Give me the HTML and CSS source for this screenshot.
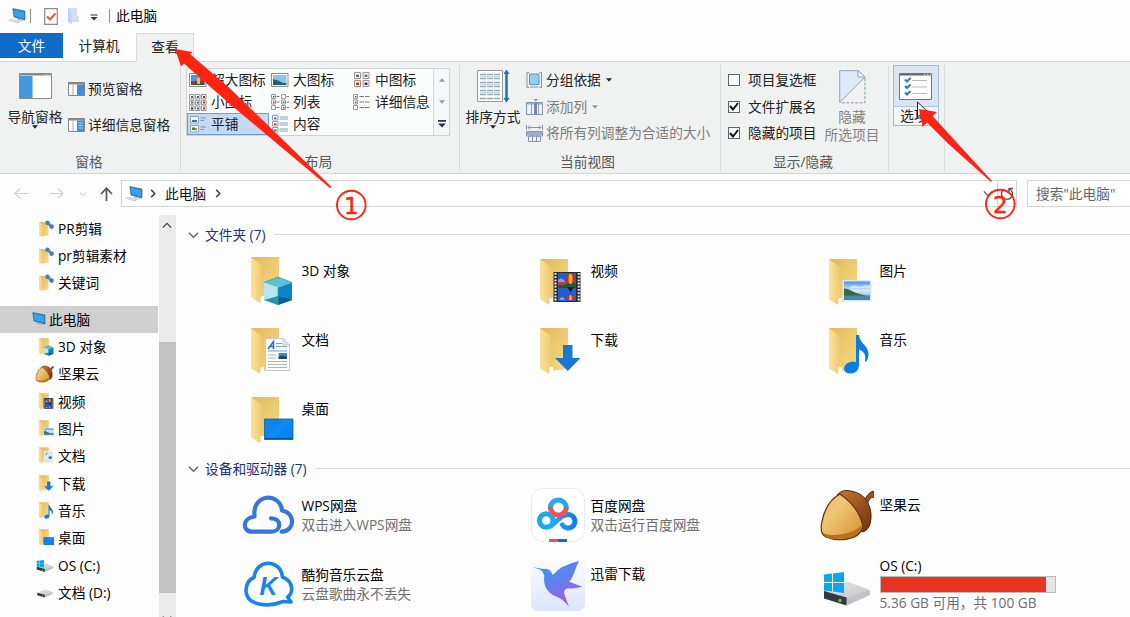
FILE: index.html
```
<!DOCTYPE html>
<html lang="zh-CN">
<head>
  <meta charset="UTF-8">
  <meta name="viewport" content="width=device-width, initial-scale=1.0">
  <title>此电脑</title>
  <link rel="stylesheet" href="styles.css">
</head>
<body>
  <svg class="defs" width="0" height="0">
    <defs>
      <linearGradient id="gFlap" x1="0" y1="0" x2="1" y2="0"><stop offset="0" stop-color="#fbe29c"/><stop offset="1" stop-color="#efcb72"/></linearGradient>
      <linearGradient id="gBack" x1="0" y1="0" x2="1" y2="1"><stop offset="0" stop-color="#e3b95b"/><stop offset="1" stop-color="#f7da85"/></linearGradient>
      <linearGradient id="gNut" x1="0" y1="0" x2="1" y2="1"><stop offset="0" stop-color="#e9bd68"/><stop offset=".35" stop-color="#f0c674"/><stop offset="1" stop-color="#d38d2b"/></linearGradient>
      <linearGradient id="gCap" x1="0" y1="0" x2="1" y2="1"><stop offset="0" stop-color="#c87a32"/><stop offset="1" stop-color="#6f3010"/></linearGradient>
      <linearGradient id="gBird" x1="0" y1="0" x2=".6" y2="1"><stop offset="0" stop-color="#3a9cf2"/><stop offset=".5" stop-color="#5b83ee"/><stop offset="1" stop-color="#a85be0"/></linearGradient>
      <linearGradient id="gCard" x1="0" y1="0" x2="0" y2="1"><stop offset="0" stop-color="#fdfdff"/><stop offset="1" stop-color="#dce5fd"/></linearGradient>
      <linearGradient id="gSky" x1="0" y1="0" x2="0" y2="1"><stop offset="0" stop-color="#4f93e0"/><stop offset=".5" stop-color="#dcecf8"/><stop offset="1" stop-color="#5b93b5"/></linearGradient>
      <linearGradient id="gBaidu" x1="0" y1="0" x2="1" y2="0"><stop offset="0" stop-color="#1fb0ee"/><stop offset="1" stop-color="#0f7ff0"/></linearGradient>
      <linearGradient id="gDrive" x1="0" y1="0" x2="1" y2="1"><stop offset="0" stop-color="#e6e7e9"/><stop offset="1" stop-color="#c3c5c9"/></linearGradient>
    </defs>

    <symbol id="folder" viewBox="0 0 54 54">
      <path d="M9 3H37V44L19 46Z" fill="url(#gBack)"/>
      <path d="M17 42H22V47L19 49Z" fill="#fff"/>
      <path d="M9 3L19.6 11V41.5L18.4 43V49L9 43.5Z" fill="url(#gFlap)"/>
    </symbol>
    <symbol id="objects" viewBox="0 0 54 54">
      <use href="#folder"/>
      <path d="M36 23L50 28.5L36 33.5L22 28.5Z" fill="#5cc0d2"/>
      <path d="M22 28.5L36 33.5V51L22 46Z" fill="#b9e6ee"/>
      <path d="M50 28.5L36 33.5V51L50 46Z" fill="#0b84c6"/>
      <path d="M22 46L36 42V51Z" fill="#1e98a8"/><path d="M50 46L36 42V51Z" fill="#075f8f"/>
      <path d="M22 28.5L36 23L50 28.5M36 33.5V51" fill="none" stroke="#2aa5be" stroke-width=".8"/>
    </symbol>
    <symbol id="video" viewBox="0 0 54 54">
      <use href="#folder"/>
      <g transform="translate(0 -2)">
        <path d="M22.500 18H49.500V48H22.500Z" fill="#2b2b2b"/>
        <path d="M27 19H45V32H27ZM27 33.500H45V47H27Z" fill="#245ccf"/>
        <path d="M24.500 19V48M47.700 19V48" stroke="#f4f4f4" stroke-width="2" stroke-dasharray="1.800 1.400"/>
        <path d="M27 26q3-3 6 0l2 4h-8z" fill="#7aa6ea"/>
        <path d="M27 29.500H45V33H27Z" fill="#17613a"/>
        <path d="M27 28h7v3h-7z" fill="#c23a42"/>
        <ellipse cx="39.500" cy="25" rx="4.700" ry="5" fill="#d9281a"/><ellipse cx="39.500" cy="25" rx="2" ry="5" fill="#f4b91c"/>
        <path d="M36 33l3.500 5 3.500-5z" fill="#191919"/>
        <path d="M35 46q0-5 4.500-5t4.500 5z" fill="#d9281a"/><path d="M38 46q0-5 1.500-5t1.500 5z" fill="#f4b91c"/>
        <path d="M28 46q3-6 6 0z" fill="#7aa6ea"/>
      </g>
    </symbol>
    <symbol id="picture" viewBox="0 0 54 54">
      <use href="#folder"/>
      <path d="M22.500 24H51.500V45.500H22.500Z" fill="#dbe6f1"/>
      <path d="M24 25.500H50V44H24Z" fill="url(#gSky)"/>
      <path d="M24 32.500Q27 32 31 34.500T47 40H24Z" fill="#356b49"/>
      <path d="M24 39.500H50V44H24Z" fill="#4c86a5"/>
      <path d="M30 31q4-3 7-1t8-1q2 1 5 0v3H30z" fill="#fff" opacity=".5"/>
    </symbol>
    <symbol id="docs" viewBox="0 0 54 54">
      <use href="#folder"/>
      <path d="M23.500 13.500H41L47.500 20V45.500H23.500Z" fill="#fbfbfc" stroke="#c3c6ca" stroke-width=".9"/>
      <path d="M41 13.500V20H47.500Z" fill="#e4e7ea" stroke="#b5b8bc" stroke-width=".7"/>
      <path d="M26 24L31.500 16.500V24M28 21.500H31.500" fill="none" stroke="#2475b5" stroke-width="1.500"/>
      <path d="M34 18.500H40M34 21.500H45M26 26H45" stroke="#6fa7d2" stroke-width="1"/>
      <path d="M26 30H34M26 33H34M26 36.500H45M26 39.500H45M26 42.500H45" stroke="#aeb4ba" stroke-width="1"/>
      <path d="M36.500 28H45V34H36.500Z" fill="#3a8cc7"/><path d="M36.500 32Q40 29 45 32V34H36.500Z" fill="#244f63"/>
    </symbol>
    <symbol id="download" viewBox="0 0 54 54">
      <use href="#folder"/>
      <path d="M32 20H41.500V33H49.500L36.800 46L24 33H32Z" fill="#1878d3"/>
    </symbol>
    <symbol id="music" viewBox="0 0 54 54">
      <use href="#folder"/>
      <path d="M36 10H38.800Q40 16 44.500 20Q50 26 48 33Q47 36 45 37Q47 27 39 24.500V41Q38 48 31 48.500Q24 48.500 24 43.500Q25 37 33 36.500Q35 36.500 36 37.200Z" fill="#0a7de2"/>
    </symbol>
    <symbol id="desktop" viewBox="0 0 54 54">
      <use href="#folder"/>
      <path d="M22.500 25H51V45.500H22.500Z" fill="#0a84ee" stroke="#0a5da8" stroke-width=".8"/>
      <path d="M23 44.600H51" stroke="#08569e" stroke-width="1.300"/>
      <path d="M23 44L40 25.500H50.500L32 44Z" fill="#2a97f7" opacity=".25"/>
    </symbol>
    <symbol id="pinned" viewBox="0 0 17 18">
      <path d="M1 2H10.500V15.500L4.500 16.500Z" fill="url(#gBack)"/>
      <path d="M1 2L4.600 4.500V17L1 15.500Z" fill="url(#gFlap)"/>
      <path d="M9 3L13.500 6.500" stroke="#3e7fb5" stroke-width="2"/>
      <circle cx="9.500" cy="2.700" r="2.200" fill="#4180b5"/><circle cx="13.600" cy="6.600" r="2.300" fill="#4180b5"/>
      <circle cx="12" cy="3" r="1" fill="#86b4db"/>
    </symbol>
    <symbol id="pc" viewBox="0 0 18 16">
      <path d="M4.800 .6L17 3V12L6 9Z" fill="#1b76bd" stroke="#3b5f78" stroke-width=".6"/>
      <path d="M5.600 1.500L16.300 3.700V10.800L6.600 8.200Z" fill="#38a0ee"/>
      <path d="M9.500 10.500L14.500 11.800L15.500 13L9 12Z" fill="#a9b0b6"/>
      <path d="M0 12.200L3.500 11L13 13.500L9.500 15.600Z" fill="#c2c7cb"/>
      <path d="M2 12.200L10 14.600M3.500 11.600L11.500 13.900" stroke="#eceeef" stroke-width=".5"/>
    </symbol>
    <symbol id="nut" viewBox="0 0 54 54">
      <path d="M44 15Q46 6 53 3Q55 5 54 9Q49 9 47 17Z" fill="#9a5424" stroke="#552409"/>
      <path d="M17 7Q22 1 31 3Q43 5 48 15Q53 25 50 36Q48 43 42 44Z" fill="url(#gCap)" stroke="#5b270b"/>
      <path d="M20 6Q5 14 1.500 36Q0 46 6 49Q15 53 27 51Q40 49 43 39Q40 20 20 6Z" fill="url(#gNut)" stroke="#6f310d" stroke-width="1.300"/>
      <path d="M42 37Q33 46 15 47Q7 47 3 45Q5 50 12 50.500Q40 53 42 37Z" fill="#b9711a"/>
    </symbol>
    <symbol id="wps" viewBox="0 0 54 54">
      <path d="M29 30.300C40 30 40 43.700 29 43.700H10C0 43.700 0 30 12.500 28.500C10 5 38 4 40 22.500C54 25 53 43 39.700 43.700" fill="none" stroke="#3576de" stroke-width="4.200" stroke-linecap="round" stroke-linejoin="round"/>
    </symbol>
    <symbol id="baidu" viewBox="0 0 54 54">
      <rect x=".5" y=".5" width="53" height="53" rx="11" fill="#fff" stroke="#ebebee"/>
      <circle cx="15.200" cy="32.500" r="6.800" fill="none" stroke="#1ba9ee" stroke-width="5"/>
      <path d="M20 38L33.500 26M31.300 36.800A6.800 6.800 0 1 0 33.500 27.500L21.500 25" fill="none" stroke="url(#gBaidu)" stroke-width="5" stroke-linecap="round"/>
      <circle cx="27.300" cy="20" r="6" fill="#fff"/>
      <path d="M19.300 20A8 8 0 0 1 35.300 20" fill="none" stroke="#25a8ef" stroke-width="5"/>
      <path d="M19.300 19A8 8 0 1 0 35.300 19" fill="none" stroke="#f0505c" stroke-width="5"/>
      <path d="M18 51H27V54H18Z" fill="#ee5061"/><path d="M27 51H36V54H27Z" fill="#1869d8"/>
    </symbol>
    <symbol id="xunlei" viewBox="0 0 54 54">
      <rect width="54" height="54" rx="7" fill="url(#gCard)"/>
      <path d="M2.300 10.300L12.300 12Q19 10.500 21.700 18Q30 8 48 4Q45 10 43 16.300Q41 22 38.300 24.700L51.300 29.700Q43 32 37 31.300Q33 32 33 36.300L38 49.700Q32 42 25.700 39.700Q15.700 36 13.500 27Q12.500 22 13.300 18.500Q12.500 15 9.700 13Z" fill="url(#gBird)"/>
    </symbol>
    <symbol id="drive" viewBox="0 0 54 30">
      <path d="M4 14L28 5L50 14V18L28 28L4 21Z" fill="#bfc2c5"/>
      <path d="M4 14L28 5L50 13L27 21Z" fill="url(#gDrive)"/>
      <path d="M4 14L26.500 20.500V28.500L4 21.500Z" fill="#35383b"/>
      <circle cx="20" cy="23.500" r="1.800" fill="#42d058"/>
    </symbol>
    <symbol id="osdrive" viewBox="0 0 54 54">
      <use href="#drive" x="0" y="20" width="54" height="30"/>
      <path d="M4 17.500L12 16.500V25H4ZM13 16.400L24 15V25H13ZM4 26H12V34.500L4 33.500ZM13 26H24V36L13 34.600Z" fill="#08a6ec"/>
    </symbol>

    <symbol id="v-xl" viewBox="0 0 18 16">
      <path d="M.5 1.500H17V14.500H.5Z" fill="#fff" stroke="#8c8c8c"/>
      <path d="M2 3H15.500V13H2Z" fill="#5a96d6"/><path d="M2 9H15.500V13H2Z" fill="#275c35"/>
      <path d="M8 6h3v6H8z" fill="#f0c42c"/><path d="M11.500 5h2.500v6h-2.500zM3 9h3v3H3z" fill="#cf2e24"/>
    </symbol>
    <symbol id="v-lg" viewBox="0 0 18 16">
      <path d="M.5 1.500H17V14.500H.5Z" fill="#fff" stroke="#8c8c8c"/>
      <path d="M2 3H15.500V13H2Z" fill="#8cc5ea"/><path d="M2 7Q7 8 12 11H15.500V13H2Z" fill="#245f72"/>
    </symbol>
    <symbol id="v-md" viewBox="0 0 18 16">
      <path d="M1.500.5H7.500V6.500H1.500ZM10 .5H16V6.500H10ZM1.500 8.500H7.500V14.500H1.500ZM10 8.500H16V14.500H10Z" fill="#fff" stroke="#a58d84"/>
      <path d="M3 2.500H6V5H3Z" fill="#3978b8"/><path d="M11.500 2.500H14.500V5H11.500Z" fill="#2f8f85"/><path d="M3 10.500H6V13H3Z" fill="#c13d24"/><path d="M11.500 10.500H14.500V13H11.500Z" fill="#233f87"/>
    </symbol>
    <symbol id="v-sm" viewBox="0 0 18 17">
      <path d="M.5.5H5V5H.5ZM6.500.5H11V5H6.500ZM12.500.5H17V5H12.500ZM.5 6.300H5V10.800H.5ZM6.500 6.300H11V10.800H6.500ZM12.500 6.300H17V10.800H12.500ZM.5 12H5V16.500H.5ZM6.500 12H11V16.500H6.500ZM12.500 12H17V16.500H12.500Z" fill="#fff" stroke="#9d9490"/>
      <path d="M2 2H4V4H2ZM8 7.500H10V9.500H8ZM8 13.500H10V15.500H8Z" fill="#2a66a8"/><path d="M8 2H10V4H8ZM2 7.500H4V9.500H2Z" fill="#24817a"/><path d="M14 2H16V4H14ZM14 7.500H16V9.500H14ZM14 13.500H16V15.500H14Z" fill="#bd2c22"/><path d="M2 13.500H4V15.500H2Z" fill="#333"/>
    </symbol>
    <symbol id="v-list" viewBox="0 0 18 16">
      <path d="M.5.5H4.500V4.500H.5ZM.5 6H4.500V10H.5ZM.5 11.500H4.500V15.500H.5ZM10.500.5H14.500V4.500H10.500ZM10.500 6H14.500V10H10.500ZM10.500 11.500H14.500V15.500H10.500Z" fill="#fff" stroke="#999"/>
      <path d="M5.500 2.500H8.500M5.500 8H8.500M5.500 13.500H8.500M15.500 2.500H18M15.500 8H18M15.500 13.500H18" stroke="#777"/>
      <path d="M2 2H3.500V3.500H2ZM12 7.500H13.500V9H12Z" fill="#27699f"/><path d="M2 7.500H3.500V9H2ZM12 13H13.500V14.500H12Z" fill="#bb3527"/>
    </symbol>
    <symbol id="v-detail" viewBox="0 0 18 16">
      <path d="M.5.5H4.500V4.500H.5ZM.5 6H4.500V10H.5ZM.5 11.500H4.500V15.500H.5Z" fill="#fff" stroke="#999"/>
      <path d="M6.500 2.500H17M6.500 8H17M6.500 13.500H17" stroke="#777" stroke-dasharray="4.500 1"/>
      <path d="M2 2H3.500V3.500H2Z" fill="#27699f"/><path d="M2 7.500H3.500V9H2Z" fill="#bb3527"/>
    </symbol>
    <symbol id="v-tile" viewBox="0 0 18 17">
      <path d="M1.500.5H9.500V7H1.500ZM1.500 9.500H9.500V16H1.500Z" fill="#f4fafc" stroke="#9ba3aa"/>
      <path d="M3 4H8V6H3Z" fill="#2878b5"/><path d="M3 11.500H6V14H3Z" fill="#31823b"/><path d="M6 12H8V14.500H6Z" fill="#d08727"/>
      <path d="M11.500 2H17M11.500 4.500H15M11.500 11H17M11.500 13.500H15" stroke="#7b93b1"/>
    </symbol>
    <symbol id="v-content" viewBox="0 0 18 18">
      <path d="M1.500.5H7V5H1.500ZM1.500 6.500H7V11H1.500ZM1.500 12.500H7V17H1.500Z" fill="#fff" stroke="#999"/>
      <path d="M3 2.500H5.500V4H3ZM3 14.500H5.500V16H3Z" fill="#27699f"/><path d="M3 8.500H5.500V10H3Z" fill="#a63535"/>
      <path d="M8.500 2H17M8.500 4H17M8.500 8H17M8.500 10H17M8.500 14H17M8.500 16H17" stroke="#8aa0c8"/>
    </symbol>
    <symbol id="down" viewBox="0 0 7 4"><path d="M0 0H7L3.500 4Z" fill="currentColor"/></symbol>
    <symbol id="chev-r" viewBox="0 0 6 10"><path d="M1 1L5 5L1 9" fill="none" stroke="currentColor" stroke-width="1.700"/></symbol>
    <symbol id="chev-d" viewBox="0 0 12 8"><path d="M1 1.500L6 6.500L11 1.500" fill="none" stroke="currentColor" stroke-width="1.500"/></symbol>
  </svg>

  <div class="window">
    <div class="titlebar">
      <svg class="tb-pc" width="18" height="16"><use href="#pc"/></svg>
      <span class="sep"></span>
      <svg class="tb-check" width="14" height="17" viewBox="0 0 14 17"><path d="M.7.700H13.300V16.300H.7Z" fill="#fdfdfd" stroke="#8c8c8c" stroke-width="1.200"/><path d="M3 8.500L6 11.500L11.500 5.500" fill="none" stroke="#e0662c" stroke-width="2.200"/></svg>
      <svg class="tb-folder" width="12" height="16" viewBox="0 0 12 16"><path d="M0 0H9V8H11V14H4L3 16L0 14Z" fill="#d3e0f0"/><path d="M0 0L3.500 2V16L0 14Z" fill="#c0d3ea"/></svg>
      <svg class="tb-drop" width="8" height="7" viewBox="0 0 8 7"><path d="M.5.500H7.500V1.500H.5Z" fill="#333"/><path d="M.5 3H7.500L4 6.500Z" fill="#333"/></svg>
      <span class="sep"></span>
      <span class="title">此电脑</span>
    </div>

    <div class="tabs">
      <div class="tab file">文件</div>
      <div class="tab computer">计算机</div>
      <div class="tab active">查看</div>
    </div>

    <div class="ribbon">
      <div class="group panes">
        <div class="group-body">
          <div class="big-btn">
            <svg width="33" height="26" viewBox="0 0 33 26"><path d="M.5.500H32.500V25.500H.5Z" fill="#fff" stroke="#8a8a8a"/><path d="M1 1H32V2.500H1Z" fill="#888"/><path d="M25 2H26.500M28 2H29.500M31 2H32" stroke="#ddd"/><path d="M1 3H13.500V25H1Z" fill="#4398dd"/></svg>
            <span>导航窗格</span>
            <svg class="caret" width="6" height="4"><use href="#down"/></svg>
          </div>
          <div class="pane-list">
            <div class="cmd"><svg width="17" height="14" viewBox="0 0 17 14"><path d="M.5.500H16.500V13.500H.5Z" fill="#fff" stroke="#828282"/><path d="M1 1H16V2.500H1Z" fill="#8d8d8d"/><path d="M5 2V13" stroke="#aaa"/><path d="M9 2.500H16V13H9Z" fill="#3d90d7"/></svg>预览窗格</div>
            <div class="cmd"><svg width="17" height="14" viewBox="0 0 17 14"><path d="M.5.500H16.500V13.500H.5Z" fill="#fff" stroke="#828282"/><path d="M1 1H16V2.500H1Z" fill="#8d8d8d"/><path d="M5 2V13" stroke="#aaa"/><path d="M9 2.500H16V13H9Z" fill="#3d90d7"/><path d="M10.500 5H15M10.500 7.500H15M10.500 10H15" stroke="#b5d9f5"/></svg>详细信息窗格</div>
          </div>
        </div>
        <div class="caption">窗格</div>
      </div>

      <div class="group layout">
        <div class="gallery">
          <div class="gallery-items">
            <div class="view"><svg width="18" height="16"><use href="#v-xl"/></svg>超大图标</div>
            <div class="view"><svg width="18" height="16"><use href="#v-lg"/></svg>大图标</div>
            <div class="view"><svg width="18" height="16"><use href="#v-md"/></svg>中图标</div>
            <div class="view"><svg width="18" height="17"><use href="#v-sm"/></svg>小图标</div>
            <div class="view"><svg width="18" height="16"><use href="#v-list"/></svg>列表</div>
            <div class="view"><svg width="18" height="16"><use href="#v-detail"/></svg>详细信息</div>
            <div class="view selected"><svg width="18" height="17"><use href="#v-tile"/></svg>平铺</div>
            <div class="view"><svg width="18" height="18"><use href="#v-content"/></svg>内容</div>
          </div>
          <div class="gallery-scroll">
            <svg class="flip" width="6" height="4"><use href="#down"/></svg>
            <svg width="6" height="4"><use href="#down"/></svg>
            <svg class="more" width="8" height="8" viewBox="0 0 8 8"><path d="M0 0H8V1.700H0ZM0 3.500H8L4 7.500Z" fill="currentColor"/></svg>
          </div>
        </div>
        <div class="caption">布局</div>
      </div>

      <div class="group current">
        <div class="group-body">
          <div class="big-btn">
            <svg width="33" height="34" viewBox="0 0 33 34"><path d="M.5 1.500H25.500V32.500H.5Z" fill="#fff" stroke="#999"/><path d="M3 5.500H23M3 9.500H23M3 13.500H23M3 17.500H23M3 21.500H23M3 25.500H23M3 29.500H23" stroke="#9aa6ae" stroke-width="1.500" stroke-dasharray="6 1"/><path d="M3 7.500H23M3 15.500H23M3 23.500H23" stroke="#bcd7e6"/><path d="M29.500 4V30" stroke="#1c6fb5" stroke-width="2.400"/><path d="M26.500 5L29.500 .5L32.500 5ZM26.500 29L29.500 33.500L32.500 29Z" fill="#1c6fb5"/></svg>
            <span>排序方式</span>
            <svg class="caret" width="6" height="4"><use href="#down"/></svg>
          </div>
          <div class="current-list">
            <div class="cmd"><svg width="17" height="16" viewBox="0 0 17 16"><path d="M3.500 2H13V12.500H3.500Z" fill="#98cdf4" stroke="#5a9bcc"/><path d="M3 .5H1V15.500H3M13.500.500H15.500V15.500H13.500M4 15H12.500" fill="none" stroke="#8b9399"/></svg>分组依据<svg class="caret" width="6" height="4"><use href="#down"/></svg></div>
            <div class="cmd off"><svg width="17" height="16" viewBox="0 0 17 16"><path d="M.5 3.500H16.500V15.500H.5Z" fill="#edf1f9" stroke="#8795b4"/><path d="M1 4H16V5.500H1Z" fill="#a4b0cb"/><path d="M5.500 4V15M12.500 4V15" stroke="#93a0bd"/><path d="M8 4H11V15H8Z" fill="#7586ab"/><path d="M7.500 0H12L9.700 2.500Z" fill="#8795b4"/></svg>添加列<svg class="caret" width="6" height="4"><use href="#down"/></svg></div>
            <div class="cmd off"><svg width="17" height="17" viewBox="0 0 17 17"><path d="M.5 0V5M16.500 0V5M2 2.500H15M4 .5L2 2.500L4 4.500M13 .5L15 2.500L13 4.500" fill="none" stroke="#8190b2"/><path d="M.5 6.500H16.500V11H.5ZM2.500 11H14.500V16.500H2.500Z" fill="#edf1f9" stroke="#8795b4"/><path d="M1 7H16V10H1Z" fill="#9fadcc"/><path d="M6.500 10V16.500M10.500 10V16.500" stroke="#8795b4"/></svg>将所有列调整为合适的大小</div>
          </div>
        </div>
        <div class="caption">当前视图</div>
      </div>

      <div class="group showhide">
        <div class="group-body">
          <div class="checks">
            <label><span class="box"></span>项目复选框</label>
            <label><span class="box"><svg width="10" height="9" viewBox="0 0 10 9"><path d="M1 4L4 7.500L9 1" fill="none" stroke="#111" stroke-width="2"/></svg></span>文件扩展名</label>
            <label><span class="box"><svg width="10" height="9" viewBox="0 0 10 9"><path d="M1 4L4 7.500L9 1" fill="none" stroke="#111" stroke-width="2"/></svg></span>隐藏的项目</label>
          </div>
          <div class="big-btn hide-btn">
            <svg width="27" height="34" viewBox="0 0 27 34"><path d="M.7.700H19L26 7L.7 32.500Z" fill="#dfe9f6" stroke="#8fa5c6"/><path d="M19 .7V7H26Z" fill="#f7faff" stroke="#8fa5c6"/><path d="M26 8V32.800H1" fill="none" stroke="#8595ad" stroke-dasharray="3 1.500"/></svg>
            <span>隐藏<br>所选项目</span>
          </div>
        </div>
        <div class="caption">显示/隐藏</div>
      </div>

      <div class="group options">
        <div class="options-btn">
          <div class="options-icon">
            <svg width="33" height="27" viewBox="0 0 33 27"><path d="M.5.500H32.500V26.500H.5Z" fill="#fff" stroke="#777"/><path d="M1 1H32V2.500H1Z" fill="#666"/><path d="M25 1.700H26.500M28 1.700H29.500M31 1.700H32" stroke="#ddd"/><path d="M13 7.500H28M13 14H28M13 20.500H28" stroke="#bbb"/><path d="M6 6.500L8 8.500L11.500 5M6 13L8 15L11.500 11.500M6 19.500L8 21.500L11.500 18" fill="none" stroke="#2f78b8" stroke-width="2"/></svg>
          </div>
          <div class="options-label">选项</div>
        </div>
      </div>
    </div>

    <div class="navbar">
      <svg class="back" width="14" height="11" viewBox="0 0 14 11"><path d="M6 .7L1 5.500L6 10.300M1 5.500H14" fill="none" stroke="#cfcfcf" stroke-width="1.200"/></svg>
      <svg class="fwd" width="14" height="11" viewBox="0 0 14 11"><path d="M8 .7L13 5.500L8 10.300M0 5.500H13" fill="none" stroke="#cfcfcf" stroke-width="1.200"/></svg>
      <svg class="recent" width="8" height="6"><use href="#chev-d"/></svg>
      <svg class="up" width="13" height="14" viewBox="0 0 13 14"><path d="M1 7L6.500 1.200L12 7M6.500 1.500V14" fill="none" stroke="#555" stroke-width="1.700"/></svg>
      <div class="address">
        <svg width="18" height="16"><use href="#pc"/></svg>
        <svg class="crumb" width="6" height="9"><use href="#chev-r"/></svg>
        <span>此电脑</span>
        <svg class="crumb" width="6" height="9"><use href="#chev-r"/></svg>
        <svg class="addr-drop" width="10" height="7"><use href="#chev-d"/></svg>
        <div class="refresh"><svg width="14" height="14" viewBox="0 0 14 14"><path d="M9.500 2A5.500 5.500 0 1 1 4 2.200M9 5.500V1.500H13" fill="none" stroke="#555" stroke-width="1.400"/></svg></div>
      </div>
      <div class="search">搜索"此电脑"</div>
    </div>

    <div class="main">
      <div class="tree">
        <div class="node"><svg width="17" height="18"><use href="#pinned"/></svg>PR剪辑</div>
        <div class="node"><svg width="17" height="18"><use href="#pinned"/></svg>pr剪辑素材</div>
        <div class="node last"><svg width="17" height="18"><use href="#pinned"/></svg>关键词</div>
        <div class="node root"><svg width="18" height="16"><use href="#pc"/></svg>此电脑</div>
        <div class="node"><svg width="17" height="18" viewBox="8 2 45 50"><use href="#objects" width="54" height="54"/></svg>3D 对象</div>
        <div class="node nutrow"><svg width="19" height="18"><use href="#nut"/></svg>坚果云</div>
        <div class="node"><svg width="17" height="18" viewBox="8 2 45 50"><use href="#video" width="54" height="54"/></svg>视频</div>
        <div class="node"><svg width="17" height="18" viewBox="8 2 45 50"><use href="#picture" width="54" height="54"/></svg>图片</div>
        <div class="node"><svg width="17" height="18" viewBox="8 2 45 50"><use href="#docs" width="54" height="54"/></svg>文档</div>
        <div class="node"><svg width="17" height="18" viewBox="8 2 45 50"><use href="#download" width="54" height="54"/></svg>下载</div>
        <div class="node"><svg width="17" height="18" viewBox="8 2 45 50"><use href="#music" width="54" height="54"/></svg>音乐</div>
        <div class="node"><svg width="17" height="18" viewBox="8 2 45 50"><use href="#desktop" width="54" height="54"/></svg>桌面</div>
        <div class="node disk"><svg width="18" height="16" viewBox="2 12 50 40"><use href="#osdrive" width="54" height="54"/></svg>OS (C:)</div>
        <div class="node disk"><svg width="18" height="10"><use href="#drive"/></svg>文档 (D:)</div>
      </div>
      <div class="scrollbar">
        <div class="scroll-up"><svg class="flip" width="10" height="7"><use href="#chev-d"/></svg></div>
        <div class="thumb"></div>
        <div class="scroll-down"><svg width="10" height="7"><use href="#chev-d"/></svg></div>
      </div>

      <div class="content">
        <div class="section">
          <svg width="11" height="8"><use href="#chev-d"/></svg><span>文件夹 (7)</span><div class="rule"></div>
        </div>
        <div class="tiles folders">
          <div class="tile cube"><svg width="54" height="54"><use href="#objects"/></svg><div class="info"><p>3D 对象</p></div></div>
          <div class="tile"><svg width="54" height="54"><use href="#video"/></svg><div class="info"><p>视频</p></div></div>
          <div class="tile"><svg width="54" height="54"><use href="#picture"/></svg><div class="info"><p>图片</p></div></div>
          <div class="tile"><svg width="54" height="54"><use href="#docs"/></svg><div class="info"><p>文档</p></div></div>
          <div class="tile"><svg width="54" height="54"><use href="#download"/></svg><div class="info"><p>下载</p></div></div>
          <div class="tile"><svg width="54" height="54"><use href="#music"/></svg><div class="info"><p>音乐</p></div></div>
          <div class="tile"><svg width="54" height="54"><use href="#desktop"/></svg><div class="info"><p>桌面</p></div></div>
        </div>
        <div class="section">
          <svg width="11" height="8"><use href="#chev-d"/></svg><span>设备和驱动器 (7)</span><div class="rule"></div>
        </div>
        <div class="tiles devices">
          <div class="tile"><svg width="54" height="54"><use href="#wps"/></svg><div class="info two"><p>WPS网盘</p><p class="sub">双击进入WPS网盘</p></div></div>
          <div class="tile"><svg width="54" height="54"><use href="#baidu"/></svg><div class="info two"><p>百度网盘</p><p class="sub">双击运行百度网盘</p></div></div>
          <div class="tile"><svg width="54" height="54"><use href="#nut"/></svg><div class="info"><p>坚果云</p></div></div>
          <div class="tile">
            <svg width="54" height="54" viewBox="0 0 54 54"><path d="M12 20.500C14 1.500 38.500 1.500 40.500 20C53 25 50.500 37 45.500 40L49 45L41 44.500C27 50.500 3.500 49 4 33C4.500 25 8 22 12 20.500Z" fill="none" stroke="#1684ea" stroke-width="3.600" stroke-linejoin="round"/><text x="17.500" y="38" class="kugou-k">K</text></svg>
            <div class="info two"><p>酷狗音乐云盘</p><p class="sub">云盘歌曲永不丢失</p></div>
          </div>
          <div class="tile"><svg width="54" height="54"><use href="#xunlei"/></svg><div class="info"><p>迅雷下载</p></div></div>
          <div class="tile drive-tile"><svg width="54" height="54"><use href="#osdrive"/></svg><div class="info"><p>OS (C:)</p><div class="usage"><div class="used" style="width: 95.4%"></div></div><p class="sub">5.36 GB 可用，共 100 GB</p></div></div>
        </div>
      </div>
    </div>

    <!-- step arrows and mouse pointer -->
    <svg class="marks" width="1130" height="617" viewBox="0 0 1130 617">
      <path d="M917.500 102V117L921 114L924 120L927 118.500L924.500 113H929Z" fill="#fff" stroke="#222"/>
      <path d="M175 49L192.500 52L190 54L230 88.500L331.500 187L330 188L228 102.500L184 63.500L181 66.500Z" fill="#ff2314"/>
      <path d="M919 109L937 112L932.500 116L948 133L992 181L991 182L948 143.500L927 122.500L922.500 127Z" fill="#ff2314"/>
      <circle cx="351.300" cy="205" r="14.300"/><text x="351.300" y="213.500">1</text>
      <circle cx="1000.300" cy="204" r="14.300"/><text x="1000.300" y="212.500">2</text>
    </svg>
  </div>
</body>
</html>
```
FILE: styles.css
```
* {
  box-sizing: border-box;
}

body {
  margin: 0;
  background: #fdfdfd;
  color: #222;
  font-family: "Open Sans", "Noto Sans CJK SC", sans-serif;
  font-size: 13.7px;
  line-height: 18px;
  overflow: hidden;
}

svg {
  display: block;
  flex: none;
}

p {
  margin: 0;
}

.defs {
  position: absolute;
}

.window {
  position: relative;
  width: 1130px;
  height: 617px;
  overflow: hidden;
  white-space: nowrap;
  display: flex;
  flex-direction: column;
}

.flip {
  transform: scaleY(-1);
}

/* title bar */
.titlebar {
  height: 33px;
  display: flex;
  align-items: center;
  padding-left: 8px;
  padding-bottom: 1px;
}

.sep {
  width: 1px;
  height: 14px;
  background: #8f8f8f;
}

.tb-pc {
  margin-right: 4px;
}

.tb-check {
  margin-left: 13px;
}

.tb-folder {
  margin-left: 10px;
}

.tb-drop {
  margin: 2px 11px 0 10px;
}

.title {
  color: #000;
  margin-left: 6px;
}

/* tabs */
.tabs {
  height: 29px;
  display: flex;
}

.tab {
  height: 25px;
  line-height: 26px;
  text-align: center;
}

.tab.file {
  width: 63px;
  background: #0f6dc8;
  color: #fff;
}

.tab.computer {
  width: 73px;
  padding-right: 1px;
}

.tab.active {
  position: relative;
  z-index: 1;
  width: 58px;
  height: 29px;
  border: 1px solid #d8dada;
  border-bottom: none;
  background: #f0f2f2;
}

/* ribbon */
.ribbon {
  height: 113px;
  margin-top: -1px;
  display: flex;
  background: #f0f2f2;
  border-top: 1px solid #d8dada;
  border-bottom: 1px solid #d3d5d5;
  padding: 3px 0;
}

.group {
  height: 106px;
  display: flex;
  flex-direction: column;
  justify-content: space-between;
  border-right: 1px solid #d9dbdb;
}

.group-body {
  display: flex;
}

.caption {
  text-align: center;
  color: #555;
  height: 18px;
}

.panes {
  width: 181px;
}

.panes .caption {
  padding-right: 2px;
}

.layout {
  width: 279px;
}

.layout .caption {
  padding-right: 3px;
}

.current {
  width: 261px;
}

.current .caption {
  padding-right: 5px;
}

.showhide {
  width: 168px;
}

.showhide .caption {
  padding-right: 3px;
}

.options {
  width: 56px;
}

.big-btn {
  width: 70px;
  padding-top: 8px;
  display: flex;
  flex-direction: column;
  align-items: center;
  text-align: center;
}

.panes .big-btn span {
  margin-top: 9px;
}

.big-btn .caret {
  margin-top: -1px;
}

.caret {
  color: #222;
}

.cmd {
  display: flex;
  align-items: center;
  gap: 3px;
}

.cmd .caret {
  margin-left: 2px;
}

.cmd.off {
  color: #7c7c7c;
}

.off .caret {
  color: #999;
}

.pane-list {
  display: flex;
  flex-direction: column;
  gap: 18px;
  padding-top: 15px;
  margin-left: -2px;
}

.gallery {
  display: flex;
  width: 264px;
  height: 68px;
  margin: 3px 0 0 5px;
  border: 1px solid #cfd3d6;
  background: #fbfcfc;
}

.gallery-items {
  flex: 1;
  display: grid;
  grid-template-columns: 82px 82px 82px;
  grid-template-rows: 22px 22px 22px;
}

.view {
  display: flex;
  align-items: center;
  gap: 4px;
  padding-left: 2px;
}

.view.selected {
  background: #c2daf5;
  border: 1px solid #6f9fd0;
  padding-left: 1px;
}

.gallery-scroll {
  width: 16px;
  border-left: 1px solid #d5d8da;
  background: #f5f6f7;
  color: #96999c;
  display: grid;
  grid-template-rows: 22px 22px 22px;
  place-items: center;
}

.gallery-scroll .more {
  color: #2a3550;
}

.current .big-btn {
  width: 66px;
  padding-top: 4px;
}

.current .big-btn span {
  margin-top: 5px;
}

.current-list {
  display: flex;
  flex-direction: column;
  gap: 8.500px;
  padding-top: 6px;
}

.checks {
  width: 103px;
  padding: 6px 0 0 7px;
  display: flex;
  flex-direction: column;
  gap: 8.500px;
}

.checks label {
  display: flex;
  align-items: center;
  gap: 8px;
}

.box {
  width: 12px;
  height: 12px;
  flex: none;
  border: 1px solid #596476;
  background: #fff;
  display: grid;
  place-items: center;
}

.hide-btn {
  width: 56px;
  padding-top: 5px;
  color: #838383;
}

.hide-btn span {
  margin-top: 4px;
}

.options-btn {
  width: 46px;
  height: 61px;
  margin: 0 0 0 4px;
  border: 1px solid #9dbde0;
  background: #f3f6f9;
}

.options-icon {
  height: 41px;
  padding-right: 1px;
  border-bottom: 1px solid #a9c5e5;
  background: #dce5ef;
  display: grid;
  place-items: center;
}

.options-label {
  text-align: center;
  padding-right: 4px;
}

/* address bar */
.navbar {
  height: 41px;
  display: flex;
  align-items: center;
  padding-left: 14px;
  padding-bottom: 2px;
}

.fwd {
  margin-left: 22px;
}

.recent {
  margin-left: 15px;
  color: #c5c5c5;
}

.up {
  margin-left: 13px;
}

.address {
  flex: none;
  width: 896px;
  height: 27px;
  margin-left: 8px;
  border: 1px solid #d5d5d5;
  background: #fff;
  display: flex;
  align-items: center;
  color: #111;
  padding-left: 3px;
}

.crumb {
  margin: 0 9px 0 7px;
  color: #444;
}

.address span {
  margin-right: 2px;
}

.addr-drop {
  margin-left: auto;
  margin-right: 4px;
  color: #555;
}

.refresh {
  width: 19px;
  height: 25px;
  border-left: 1px solid #d5d5d5;
  display: grid;
  place-items: center;
}

.search {
  flex: none;
  width: 120px;
  height: 27px;
  line-height: 25px;
  margin-left: 10px;
  padding-left: 8px;
  border: 1px solid #d5d5d5;
  background: #fff;
  color: #666;
}

/* navigation tree */
.main {
  flex: 1;
  min-height: 0;
  display: flex;
  color: #000;
}

.tree {
  width: 158px;
}

.node {
  height: 27.350px;
  display: flex;
  align-items: center;
  gap: 3px;
  padding-left: 38px;
}

.node.last {
  margin-bottom: 9px;
}

.node.root {
  background: #cfcfcf;
  padding-left: 28px;
}

.node.nutrow {
  padding-left: 35px;
  gap: 4px;
}

.node.disk {
  padding-left: 36px;
  gap: 4px;
}

.scrollbar {
  width: 17px;
  margin-left: 1px;
  background: #ebebeb;
}

.scroll-up {
  height: 127px;
  padding: 7px 0 0 3px;
  color: #444;
}

.thumb {
  height: 251px;
  background: #c2c2c2;
}

.scroll-down {
  padding: 22px 0 0 3px;
  color: #777;
}

/* file area */
.content {
  flex: 1;
  padding: 10px 0 0 12px;
}

.section {
  height: 20px;
  display: flex;
  align-items: center;
  padding-bottom: 1px;
  color: #1c2f7c;
}

.section svg {
  color: #666;
}

.section span {
  margin: 0 8px 0 6px;
}

.rule {
  flex: 1;
  height: 1px;
  background: #dcdcdc;
}

.tiles {
  display: grid;
  grid-template-columns: 289px 289px 289px;
  grid-auto-rows: 69px;
  padding: 9px 0 0 54px;
  height: 214px;
}

.tile {
  display: flex;
  gap: 5.500px;
}

.folders svg {
  margin-top: 2px;
}

.folders .cube svg {
  margin-top: 0;
}

.info {
  padding-top: 7px;
  line-height: 19px;
}

.info.two {
  padding-top: 8px;
}

.sub {
  color: #6e6e6e;
}

.drive-tile .info {
  padding-top: 0;
}

.drive-tile p:first-child {
  margin: -1px 0 1px;
}

.usage {
  width: 176px;
  height: 17px;
  border: 1px solid #bcbcbc;
  background: #e6e6e6;
}

.used {
  height: 100%;
  background: #e83522;
}

.kugou-k {
  font: italic bold 25px "Liberation Sans", sans-serif;
  fill: #1684ea;
}

/* marks drawn over the window */
.marks {
  position: absolute;
  z-index: 2;
  left: 0;
  top: 0;
}

.marks circle {
  fill: none;
  stroke: #ff2314;
  stroke-width: 1.900;
}

.marks text {
  font: 23px "DejaVu Sans", sans-serif;
  fill: #ff2314;
  stroke: #ff2314;
  stroke-width: .5;
  text-anchor: middle;
}
```
